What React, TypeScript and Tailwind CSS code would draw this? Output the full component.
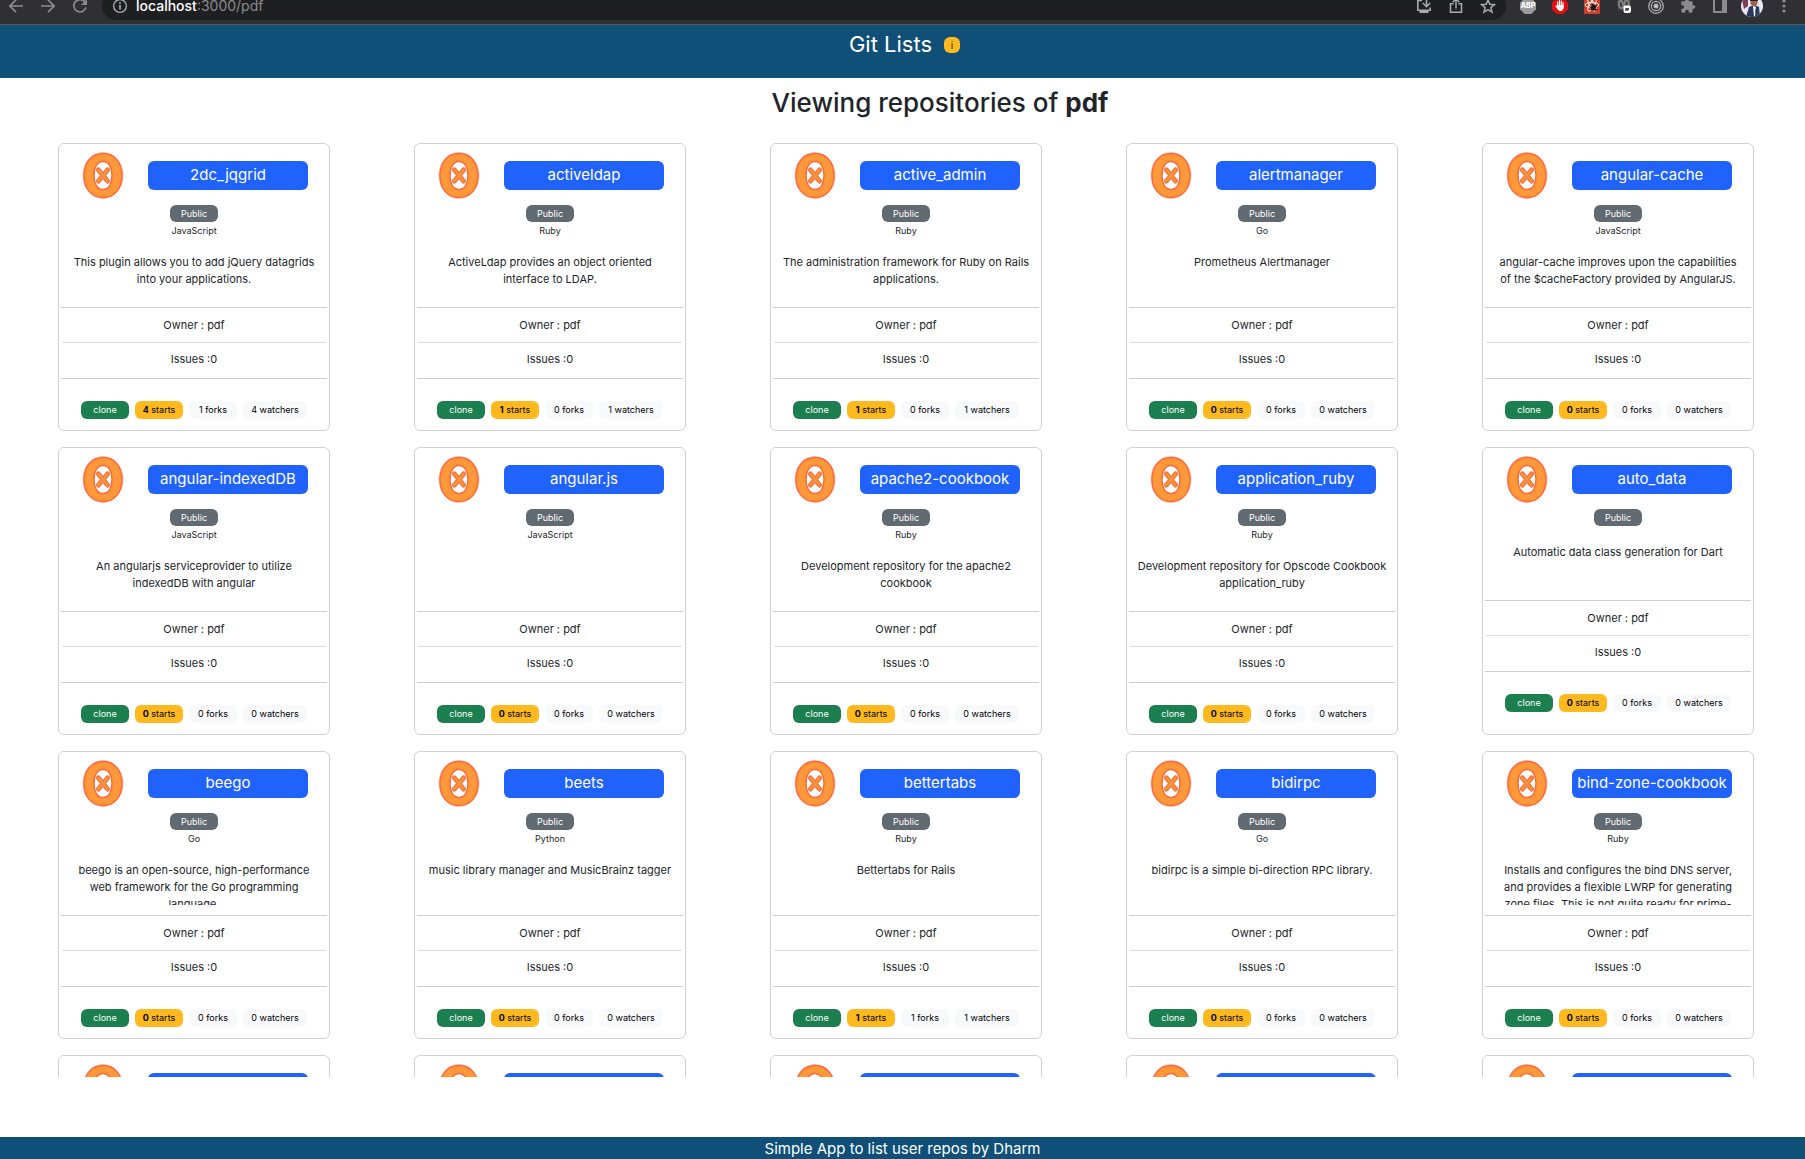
import type { ReactNode } from "react";

type Repo = {
  name: string;
  language?: string;
  description?: string;
  stars?: number;
  forks?: number;
  watchers?: number;
};

const repos: Repo[] = [
  { name: "2dc_jqgrid", language: "JavaScript", description: "This plugin allows you to add jQuery datagrids into your applications.", stars: 4, forks: 1, watchers: 4 },
  { name: "activeldap", language: "Ruby", description: "ActiveLdap provides an object oriented interface to LDAP.", stars: 1, watchers: 1 },
  { name: "active_admin", language: "Ruby", description: "The administration framework for Ruby on Rails applications.", stars: 1, watchers: 1 },
  { name: "alertmanager", language: "Go", description: "Prometheus Alertmanager" },
  { name: "angular-cache", language: "JavaScript", description: "angular-cache improves upon the capabilities of the $cacheFactory provided by AngularJS." },
  { name: "angular-indexedDB", language: "JavaScript", description: "An angularjs serviceprovider to utilize indexedDB with angular" },
  { name: "angular.js", language: "JavaScript" },
  { name: "apache2-cookbook", language: "Ruby", description: "Development repository for the apache2 cookbook" },
  { name: "application_ruby", language: "Ruby", description: "Development repository for Opscode Cookbook application_ruby" },
  { name: "auto_data", description: "Automatic data class generation for Dart" },
  { name: "beego", language: "Go", description: "beego is an open-source, high-performance web framework for the Go programming language." },
  { name: "beets", language: "Python", description: "music library manager and MusicBrainz tagger" },
  { name: "bettertabs", language: "Ruby", description: "Bettertabs for Rails", stars: 1, forks: 1, watchers: 1 },
  { name: "bidirpc", language: "Go", description: "bidirpc is a simple bi-direction RPC library." },
  { name: "bind-zone-cookbook", language: "Ruby", description: "Installs and configures the bind DNS server, and provides a flexible LWRP for generating zone files. This is not quite ready for prime-" },
];

function ToolButton({ label, children }: { label: string; children: ReactNode }) {
  return (
    <button type="button" aria-label={label} className="flex size-8 shrink-0 items-center justify-center">
      {children}
    </button>
  );
}

const line = { fill: "none", stroke: "currentColor", strokeWidth: 1.7 } as const;

function Toolbar() {
  return (
    <div className="h-[25px] shrink-0 overflow-hidden border-b border-[#58585a] bg-[#302f33] text-[#8b8b8f]">
      <div className="-mt-3 flex h-9 items-center pr-[5px]">
        <ToolButton label="Back">
          <svg width="16" height="16" viewBox="0 0 16 16" {...line}><path d="M15 8H2M8 1.8 1.8 8 8 14.2" /></svg>
        </ToolButton>
        <ToolButton label="Forward">
          <svg width="16" height="16" viewBox="0 0 16 16" {...line}><path d="M1 8h13M8 1.8 14.2 8 8 14.2" /></svg>
        </ToolButton>
        <ToolButton label="Reload">
          <svg width="16" height="16" viewBox="0 0 16 16" {...line}><path d="M13.3 4.4A6.2 6.2 0 1 0 14 9.6" /><path d="M15 1v6H9z" fill="currentColor" stroke="none" /></svg>
        </ToolButton>
        <div className="ml-[6px] mr-[6px] flex h-7 min-w-0 flex-1 items-center rounded-full bg-[#1e1f21] px-[2px] text-[#a9aaad]">
          <ToolButton label="Site information">
            <svg width="16" height="16" viewBox="0 0 16 16" fill="none" stroke="currentColor" strokeWidth="1.4"><circle cx="8" cy="8" r="6.4" /><path d="M8 7v4.6M8 4.2v1.7" strokeWidth="1.7" /></svg>
          </ToolButton>
          <span className="min-w-0 flex-1 text-sm leading-5 text-[#8b8b8f]">
            <span className="font-medium text-white">localhost</span>:3000/pdf
          </span>
          <ToolButton label="Install">
            <svg width="16" height="16" viewBox="0 0 16 16" fill="none" stroke="currentColor" strokeWidth="1.6"><path d="M6 2.500H1.800v9.700h12.400V9.500" /><path d="M3.500 14h9" strokeWidth="2" /><path d="M10.500 0v8M6.800 5l3.700 3.700L14.200 5" /></svg>
          </ToolButton>
          <ToolButton label="Share">
            <svg width="16" height="16" viewBox="0 0 16 16" fill="none" stroke="currentColor" strokeWidth="1.5"><path d="M5.500 5.800h-3v8.400h11V5.800h-3M8 10.500V1.200M4.700 4.300 8 1l3.300 3.300" /></svg>
          </ToolButton>
          <ToolButton label="Bookmark">
            <svg width="16" height="16" viewBox="0 0 16 16" fill="none" stroke="currentColor" strokeWidth="1.5"><path d="m8 2 1.800 4.200 4.600.4-3.500 3 1.100 4.500L8 11.700l-4 2.400 1.100-4.500-3.500-3 4.600-.4z" /></svg>
          </ToolButton>
        </div>
        <ToolButton label="Adblock Plus">
          <svg width="16" height="16" viewBox="0 0 16 16"><path d="M4.7 0h6.6L16 4.7v6.6L11.3 16H4.7L0 11.3V4.7z" fill="#9b9b9b" /><text x="8" y="10.400" textAnchor="middle" fontSize="7" fontWeight="800" fill="#fff">ABP</text></svg>
        </ToolButton>
        <ToolButton label="AdBlock">
          <svg width="16" height="16" viewBox="0 0 16 16"><path d="M4.7 0h6.6L16 4.7v6.6L11.3 16H4.7L0 11.3V4.7z" fill="#df1010" /><path d="M5.7 9V3.8M7.5 8V2.5M9.3 8V3M11 9V4.5M4 8l2 3" stroke="#fff" strokeWidth="1.2" strokeLinecap="round" /><path d="M5.1 7h6.5v3.5L9.8 13H7.2L5 10z" fill="#fff" /></svg>
        </ToolButton>
        <ToolButton label="React developer tools">
          <svg width="16" height="16" viewBox="0 0 16 16"><path d="M0 0h16v16H0z" fill="#d13b2a" /><g fill="none" stroke="#fff" strokeWidth="0.9"><ellipse cx="8" cy="7" rx="6.8" ry="2.6" /><ellipse cx="8" cy="7" rx="6.8" ry="2.6" transform="rotate(60 8 7)" /><ellipse cx="8" cy="7" rx="6.8" ry="2.6" transform="rotate(120 8 7)" /></g><ellipse cx="9.500" cy="9.500" rx="2.400" ry="3.200" fill="#1f1715" transform="rotate(30 9.500 9.500)" /><path d="m5.500 9 8 3M7 12.500l6-5M8 6l4 7" stroke="#1f1715" strokeWidth="1" /></svg>
        </ToolButton>
        <ToolButton label="Privacy extension">
          <svg width="16" height="16" viewBox="0 0 16 16"><path d="M1.5 0h13v12h-13z" fill="#454547" /><g fill="none" stroke="#858587" strokeWidth="1.8"><ellipse cx="5" cy="6.5" rx="2.2" ry="3.8" transform="rotate(-15 5 6.5)" /><ellipse cx="10.5" cy="6" rx="2.2" ry="3.8" /></g><rect x="7.5" y="7.5" width="7.5" height="7.5" rx="2" fill="#fff" /><path d="M9.3 10h3.6v1.5l-1.5 1.5H9.3z" fill="#454547" /></svg>
        </ToolButton>
        <ToolButton label="Target extension">
          <svg width="16" height="16" viewBox="0 0 16 16" fill="none" stroke="#b5b5b7" strokeWidth="1.2"><circle cx="8" cy="8" r="7.3" /><circle cx="8" cy="8" r="4.7" /><circle cx="8" cy="8" r="2" fill="#c8c8ca" /></svg>
        </ToolButton>
        <ToolButton label="Extensions">
          <svg width="16" height="16" viewBox="0 0 24 24" fill="currentColor"><path d="M20.5 11H19V7a2 2 0 0 0-2-2h-4V3.500a2.500 2.500 0 0 0-5 0V5H4a2 2 0 0 0-2 2v3.800h1.500a2.700 2.700 0 0 1 0 5.400H2V20a2 2 0 0 0 2 2h3.800v-1.500a2.700 2.700 0 0 1 5.400 0V22H17a2 2 0 0 0 2-2v-4h1.500a2.500 2.500 0 0 0 0-5z" /></svg>
        </ToolButton>
        <ToolButton label="Side panel">
          <svg width="16" height="16" viewBox="0 0 16 16"><path d="M1 0v15h14V0H1zm2 2h7v11H3z" fillRule="evenodd" fill="currentColor" /></svg>
        </ToolButton>
        <ToolButton label="Profile">
          <svg width="22" height="22" viewBox="0 0 22 22"><clipPath id="avatar"><circle cx="11" cy="11" r="11" /></clipPath><g clipPath="url(#avatar)"><path d="M0 0h22v22H0z" fill="#ece6f0" /><path d="M1 5h6v6l-4 3z" fill="#7a3d5c" /><path d="m5 22 3-10 5-2 5 2 1 10z" fill="#2b3a5c" /><path d="m12 11 3 1-1 9h-1z" fill="#fff" /><path d="M14 14h1v6h-1z" fill="#4b74b8" /><circle cx="13" cy="7.500" r="3.500" fill="#9c6248" /><path d="M9 6c0-5 8-5 8 0z" fill="#28202a" /></g></svg>
        </ToolButton>
        <ToolButton label="Menu">
          <svg width="16" height="16" viewBox="0 0 16 16" fill="currentColor"><circle cx="8" cy="3" r="1.600" /><circle cx="8" cy="8" r="1.600" /><circle cx="8" cy="13" r="1.600" /></svg>
        </ToolButton>
      </div>
    </div>
  );
}

function Logo() {
  return (
    <svg width="42" height="47" viewBox="0 0 42 47" aria-hidden="true" className="shrink-0">
      <ellipse cx="21" cy="23.500" rx="20.500" ry="23.500" fill="#ffc4bb" />
      <path d="M21 1.500C32.500 1.500 40 10.500 40 23.500S32.500 45.500 21 45.500 2 36.500 2 23.500 9.500 1.500 21 1.500z" fill="#ff9838" stroke="#ff6a3c" strokeWidth="1.500" />
      <path d="M21 9.500C14.800 9.500 12 16 12 23.500s2.800 14 9 14 9-6.500 9-14-2.800-14-9-14z" fill="#fff" stroke="#ff6a3c" strokeWidth="1.500" />
      <path d="m16.500 18 9 11M25.500 18l-9 11" stroke="#ff6a3c" strokeWidth="5" strokeLinecap="round" />
      <path d="m16.500 18 9 11M25.500 18l-9 11" stroke="#f5923e" strokeWidth="2.800" strokeLinecap="round" />
    </svg>
  );
}

function CardHead({ name }: { name: string }) {
  return (
    <div className="flex items-center pl-[23px] pr-[21px] pt-2">
      <Logo />
      <a href={"#" + name} className="ml-auto flex h-[29px] w-40 items-center justify-center whitespace-nowrap rounded-md bg-[#1f62fd] text-[15px] text-white">
        {name}
      </a>
    </div>
  );
}

function Card({ repo }: { repo: Repo }) {
  const { name, language, description, stars = 0, forks = 0, watchers = 0 } = repo;
  return (
    <article className="h-72 w-[272px] rounded-md border border-[#cfd0d1] text-center text-[#212529]">
      <CardHead name={name} />
      <div className="mt-[6px] flex justify-center">
        <span className="flex h-[17px] w-12 items-center justify-center rounded-md bg-[#626a71] text-[9px] text-white">Public</span>
      </div>
      {language && <p className="h-[15px] text-[9px] leading-[17px]">{language}</p>}
      <p className={"mx-[10px] overflow-hidden text-[11px] leading-[17px] " + (language ? "mt-[17px] h-[43px]" : "mt-[18px] h-[46px]")}>{description}</p>
      <div className="mx-0.5 mt-[10px] border-y border-[#cccdce] text-[11px] leading-[17px]">
        <p className="mx-px border-b border-[#dcdddd] pb-2 pt-[9px]">Owner : pdf</p>
        <p className="pb-[10px] pt-2">Issues :{"0"}</p>
      </div>
      <div className="mt-[22px] flex justify-center gap-1.5 text-[9px] leading-[18px]">
        <button type="button" className="h-[18px] w-12 rounded-md bg-[#1b7f4f] text-white">clone</button>
        <span className="h-[18px] w-12 rounded-md bg-[#fdb91e] text-black"><b>{stars}</b> starts</span>
        <span className="h-[18px] w-12 rounded-md bg-[#f8f9fa] text-black">{forks} forks</span>
        <span className="h-[18px] w-16 rounded-md bg-[#f8f9fa] text-black">{watchers} watchers</span>
      </div>
    </article>
  );
}

export default function App() {
  return (
    <div className="flex h-screen flex-col overflow-hidden bg-white font-['Inter',sans-serif]">
      <Toolbar />
      <header className="flex h-[53px] shrink-0 items-start justify-center gap-3 bg-[#0f4f78] pl-1 pt-[3px] text-white">
        <h1 className="text-[22px] leading-8">Git Lists</h1>
        <button type="button" aria-label="About" className="mt-[9px] size-4 rounded-md bg-[#fdb91e] text-[10px] leading-4 text-[#33290c]">i</button>
      </header>
      <main className="flex min-h-0 flex-1 flex-col">
        <h2 className="shrink-0 pb-[23px] pl-[75px] pt-2 text-center text-[26px] font-medium leading-[34px] text-[#212529]">
          Viewing repositories of <b className="font-bold">pdf</b>
        </h2>
        <div className="mb-[60px] grid min-h-0 flex-1 auto-rows-max grid-cols-5 justify-items-center gap-y-4 overflow-hidden pl-4 pr-[9px]">
          {repos.map((repo) => <Card key={repo.name} repo={repo} />)}
          {[1, 2, 3, 4, 5].map((slot) => (
            <article key={slot} className="h-72 w-[272px] rounded-md border border-[#cfd0d1]">
              <CardHead name="" />
            </article>
          ))}
        </div>
      </main>
      <footer className="h-[22px] shrink-0 bg-[#0f4f78] text-center text-[15px] leading-6 text-white">Simple App to list user repos by Dharm</footer>
    </div>
  );
}
